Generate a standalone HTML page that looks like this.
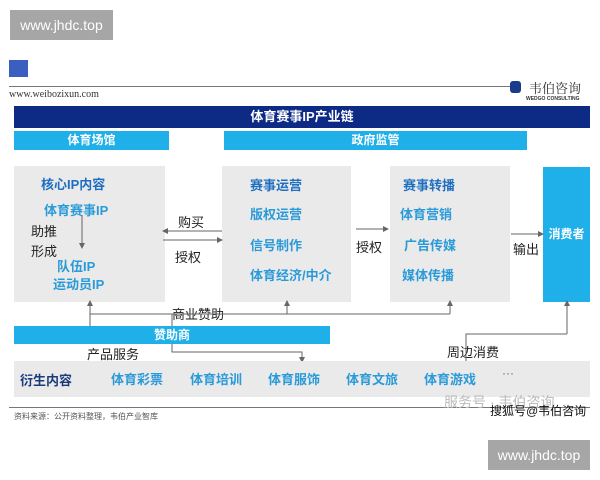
<!DOCTYPE html>
<html><head><meta charset="utf-8"><style>
body{margin:0;width:600px;height:480px;background:#fff;position:relative;overflow:hidden;font-family:"Liberation Sans","Noto Sans CJK SC",sans-serif}
.a{position:absolute;white-space:nowrap}
.wm{background:#a6a6a6;color:#fff;font-size:14px;text-align:center;line-height:30px}
.box{background:#eaeaea;position:absolute}
.b{color:#1e6fc0;font-weight:bold;font-size:13px}
.c{color:#2a9ad8;font-weight:bold;font-size:13px}
.k{color:#222;font-size:13px}
</style></head><body>
<div class="a wm" style="left:10px;top:10px;width:103px;height:30px">www.jhdc.top</div>
<div class="a" style="left:9px;top:60px;width:19px;height:17px;background:#3a5fc0"></div>
<div class="a" style="left:9px;top:86px;width:501px;height:1px;background:#777"></div>
<div class="a" style="left:9px;top:89px;font:10px 'Liberation Serif',serif;color:#333">www.weibozixun.com</div>
<div class="a" style="left:510px;top:81px;width:11px;height:12px;background:#1a3a8a;border-radius:3px"></div>
<div class="a" style="left:529px;top:78px;font:13px 'Noto Serif CJK SC',serif;color:#333">韦伯咨询</div>
<div class="a" style="left:526px;top:96px;font:bold 5px 'Liberation Sans',sans-serif;color:#333">WEDGO CONSULTING</div>
<div class="a" style="left:14px;top:106px;width:576px;height:22px;background:#0d2a85;color:#fff;font-weight:bold;font-size:13px;text-align:center;line-height:22px">体育赛事IP产业链</div>
<div class="a" style="left:14px;top:131px;width:155px;height:19px;background:#1fb0ea;color:#fff;font-weight:bold;font-size:12px;text-align:center;line-height:19px">体育场馆</div>
<div class="a" style="left:224px;top:131px;width:303px;height:19px;background:#1fb0ea;color:#fff;font-weight:bold;font-size:12px;text-align:center;line-height:19px">政府监管</div>
<div class="box" style="left:14px;top:166px;width:151px;height:136px"></div>
<div class="box" style="left:222px;top:166px;width:129px;height:136px"></div>
<div class="box" style="left:390px;top:166px;width:120px;height:136px"></div>
<div class="a" style="left:543px;top:167px;width:47px;height:135px;background:#1fb0ea;color:#fff;font-weight:bold;font-size:12px;text-align:center;line-height:135px">消费者</div>
<div class="a b" style="left:41px;top:174px">核心IP内容</div>
<div class="a c" style="left:44px;top:200px">体育赛事IP</div>
<div class="a k" style="left:31px;top:221px">助推</div>
<div class="a k" style="left:31px;top:241px">形成</div>
<div class="a c" style="left:57px;top:256px">队伍IP</div>
<div class="a c" style="left:53px;top:274px">运动员IP</div>
<div class="a b" style="left:250px;top:175px">赛事运营</div>
<div class="a c" style="left:250px;top:204px">版权运营</div>
<div class="a c" style="left:250px;top:235px">信号制作</div>
<div class="a c" style="left:250px;top:265px">体育经济/中介</div>
<div class="a b" style="left:403px;top:175px">赛事转播</div>
<div class="a c" style="left:400px;top:204px">体育营销</div>
<div class="a c" style="left:404px;top:235px">广告传媒</div>
<div class="a c" style="left:402px;top:265px">媒体传播</div>
<div class="a k" style="left:178px;top:212px">购买</div>
<div class="a k" style="left:175px;top:247px">授权</div>
<div class="a k" style="left:356px;top:237px">授权</div>
<div class="a k" style="left:513px;top:239px">输出</div>
<div class="a k" style="left:172px;top:304px">商业赞助</div>
<div class="a k" style="left:87px;top:344px">产品服务</div>
<div class="a k" style="left:447px;top:342px">周边消费</div>
<svg class="a" style="left:0;top:0" width="600" height="480">
<g stroke="#666" stroke-width="1" fill="none">
<path d="M82 215V245M163 231H222M163 240H222M356 229H387M511 234H542M90 342V302M287 314V302M450 314V302M567 334V302M90 314H450M172 314V352H302V360M466 362V334H567"/>
</g>
<g fill="#666">
<path d="M79 243L82 249L85 243Z"/><path d="M168 228L162 231L168 234Z"/><path d="M217 237L223 240L217 243Z"/><path d="M383 226L389 229L383 232Z"/><path d="M538 231L544 234L538 237Z"/>
<path d="M87 306L90 300L93 306Z"/><path d="M284 306L287 300L290 306Z"/><path d="M447 306L450 300L453 306Z"/><path d="M564 306L567 300L570 306Z"/><path d="M299 357L302 363L305 357Z"/>
</g></svg>
<div class="a" style="left:14px;top:326px;width:316px;height:18px;background:#1fb0ea;color:#fff;font-weight:bold;font-size:12px;text-align:center;line-height:18px">赞助商</div>
<div class="box" style="left:14px;top:361px;width:576px;height:36px"></div>
<div class="a" style="left:20px;top:370px;font-weight:bold;font-size:13px;color:#1a3a7a">衍生内容</div>
<div class="a c" style="left:111px;top:369px">体育彩票</div>
<div class="a c" style="left:190px;top:369px">体育培训</div>
<div class="a c" style="left:268px;top:369px">体育服饰</div>
<div class="a c" style="left:346px;top:369px">体育文旅</div>
<div class="a c" style="left:424px;top:369px">体育游戏</div>
<div class="a" style="left:502px;top:366px;color:#666;font-size:12px">···</div>
<div class="a" style="left:9px;top:407px;width:581px;height:1px;background:#777"></div>
<div class="a" style="left:14px;top:411px;font-size:8px;color:#555">资料来源：公开资料整理，韦伯产业智库</div>
<div class="a" style="left:444px;top:392px;font-size:14px;color:#bbb">服务号 · 韦伯咨询</div>
<div class="a" style="left:490px;top:402px;font-size:12px;color:#111">搜狐号@韦伯咨询</div>
<div class="a wm" style="left:488px;top:440px;width:102px;height:30px">www.jhdc.top</div>
</body></html>
